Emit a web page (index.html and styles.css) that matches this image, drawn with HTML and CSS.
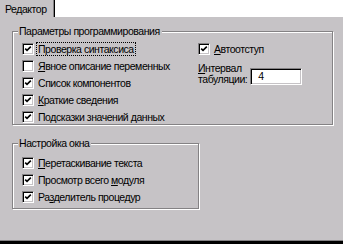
FILE: index.html
```html
<!DOCTYPE html>
<html>
<head>
  <meta charset="utf-8" />
  <title>Параметры — Редактор</title>
  <link rel="stylesheet" href="styles.css">
</head>
<body>
  <div class="tabs">
    <div class="tab">Редактор</div>
  </div>
  <div class="panel">
    <fieldset class="group group-code">
      <legend>Параметры программирования</legend>
      <div class="col-left">
        <div class="opt"><span class="box on"><svg viewBox="0 0 10 10"><path d="M1.5 4.5 L3.8 6.8 L8.5 2.1" /></svg></span><span class="lbl focus">Проверка синтаксиса</span></div>
        <div class="opt"><span class="box"></span><span class="lbl"><u>Я</u>вное описание переменных</span></div>
        <div class="opt"><span class="box on"><svg viewBox="0 0 10 10"><path d="M1.5 4.5 L3.8 6.8 L8.5 2.1" /></svg></span><span class="lbl">Список компонентов</span></div>
        <div class="opt"><span class="box on"><svg viewBox="0 0 10 10"><path d="M1.5 4.5 L3.8 6.8 L8.5 2.1" /></svg></span><span class="lbl"><u>К</u>раткие сведения</span></div>
        <div class="opt"><span class="box on"><svg viewBox="0 0 10 10"><path d="M1.5 4.5 L3.8 6.8 L8.5 2.1" /></svg></span><span class="lbl">По<u>д</u>сказки значений данных</span></div>
      </div>
      <div class="col-right">
        <div class="opt"><span class="box on"><svg viewBox="0 0 10 10"><path d="M1.5 4.5 L3.8 6.8 L8.5 2.1" /></svg></span><span class="lbl"><u>А</u>втоотступ</span></div>
        <div class="tabwidth">
          <div class="tw-label"><u>И</u>нтервал<br>табуляции:</div>
          <div class="field">4</div>
        </div>
      </div>
    </fieldset>
    <fieldset class="group group-win">
      <legend>Настройка окна</legend>
      <div class="col-left">
        <div class="opt"><span class="box on"><svg viewBox="0 0 10 10"><path d="M1.5 4.5 L3.8 6.8 L8.5 2.1" /></svg></span><span class="lbl"><u>П</u>еретаскивание текста</span></div>
        <div class="opt"><span class="box on"><svg viewBox="0 0 10 10"><path d="M1.5 4.5 L3.8 6.8 L8.5 2.1" /></svg></span><span class="lbl">Просмотр всего <u>м</u>одуля</span></div>
        <div class="opt"><span class="box on"><svg viewBox="0 0 10 10"><path d="M1.5 4.5 L3.8 6.8 L8.5 2.1" /></svg></span><span class="lbl">Ра<u>з</u>делитель процедур</span></div>
      </div>
    </fieldset>
  </div>
</body>
</html>
```
FILE: styles.css
```css
* { margin: 0; padding: 0; box-sizing: border-box; }
body { font-family: 'Liberation Sans', Arial, sans-serif; font-size: 10.5px; letter-spacing: -0.45px; color: #000; background: #fff; }
.tabs { display: flex; height: 17px; background: #fff; }
.tab { width: 55px; background: #c6c3c6; border-right: 1px solid #000; box-shadow: inset -1px 0 0 #848284; padding: 3px 0 0 5px; line-height: 12px; }
.panel { height: 227px; background: #c6c3c6; padding: 8px 9px 0 12px; border-bottom: 3px solid #000; box-shadow: inset 0 -1px 0 #848284; display: flex; flex-direction: column; gap: 12px; }
.group { border: 1px solid #848284; box-shadow: inset 1px 1px 0 #fff, 1px 1px 0 #fff; display: flex; }
.group legend { margin-left: -4px; padding: 0 2px 0 1px; line-height: 13px; background: #c6c3c6; }
.group-code { width: 321px; height: 100px; padding: 5px 0 0 9px; }
.group-win { width: 159px; height: 72px; padding: 7px 0 0 9px; }
.col-left { display: flex; flex-direction: column; gap: 5px; width: 176px; }
.col-right { display: flex; flex-direction: column; gap: 8px; }
.opt { display: flex; align-items: center; height: 12px; gap: 3px; white-space: nowrap; }
.box { width: 12px; height: 12px; flex: none; background: #fff; border: 1px solid; border-color: #848284 #fff #fff #848284; box-shadow: inset 1px 1px 0 #000, inset -1px -1px 0 #c6c3c6; padding: 1px; }
.box svg { display: block; width: 8px; height: 8px; }
.box path { fill: none; stroke: #000; stroke-width: 2; }
.lbl { line-height: 12px; padding: 0 1px; }
.lbl u { text-decoration-thickness: 1px; text-underline-offset: 1px; }
.focus { outline: 1px dotted #000; }
.tabwidth { display: flex; align-items: center; gap: 3px; }
.tw-label { line-height: 11px; }
.field { width: 52px; height: 17px; background: #fff; border: 1px solid; border-color: #848284 #fff #fff #848284; box-shadow: inset 1px 1px 0 #000, inset -1px -1px 0 #c6c3c6; padding: 2px 0 0 7px; line-height: 11px; margin-top: 5px; }
```
